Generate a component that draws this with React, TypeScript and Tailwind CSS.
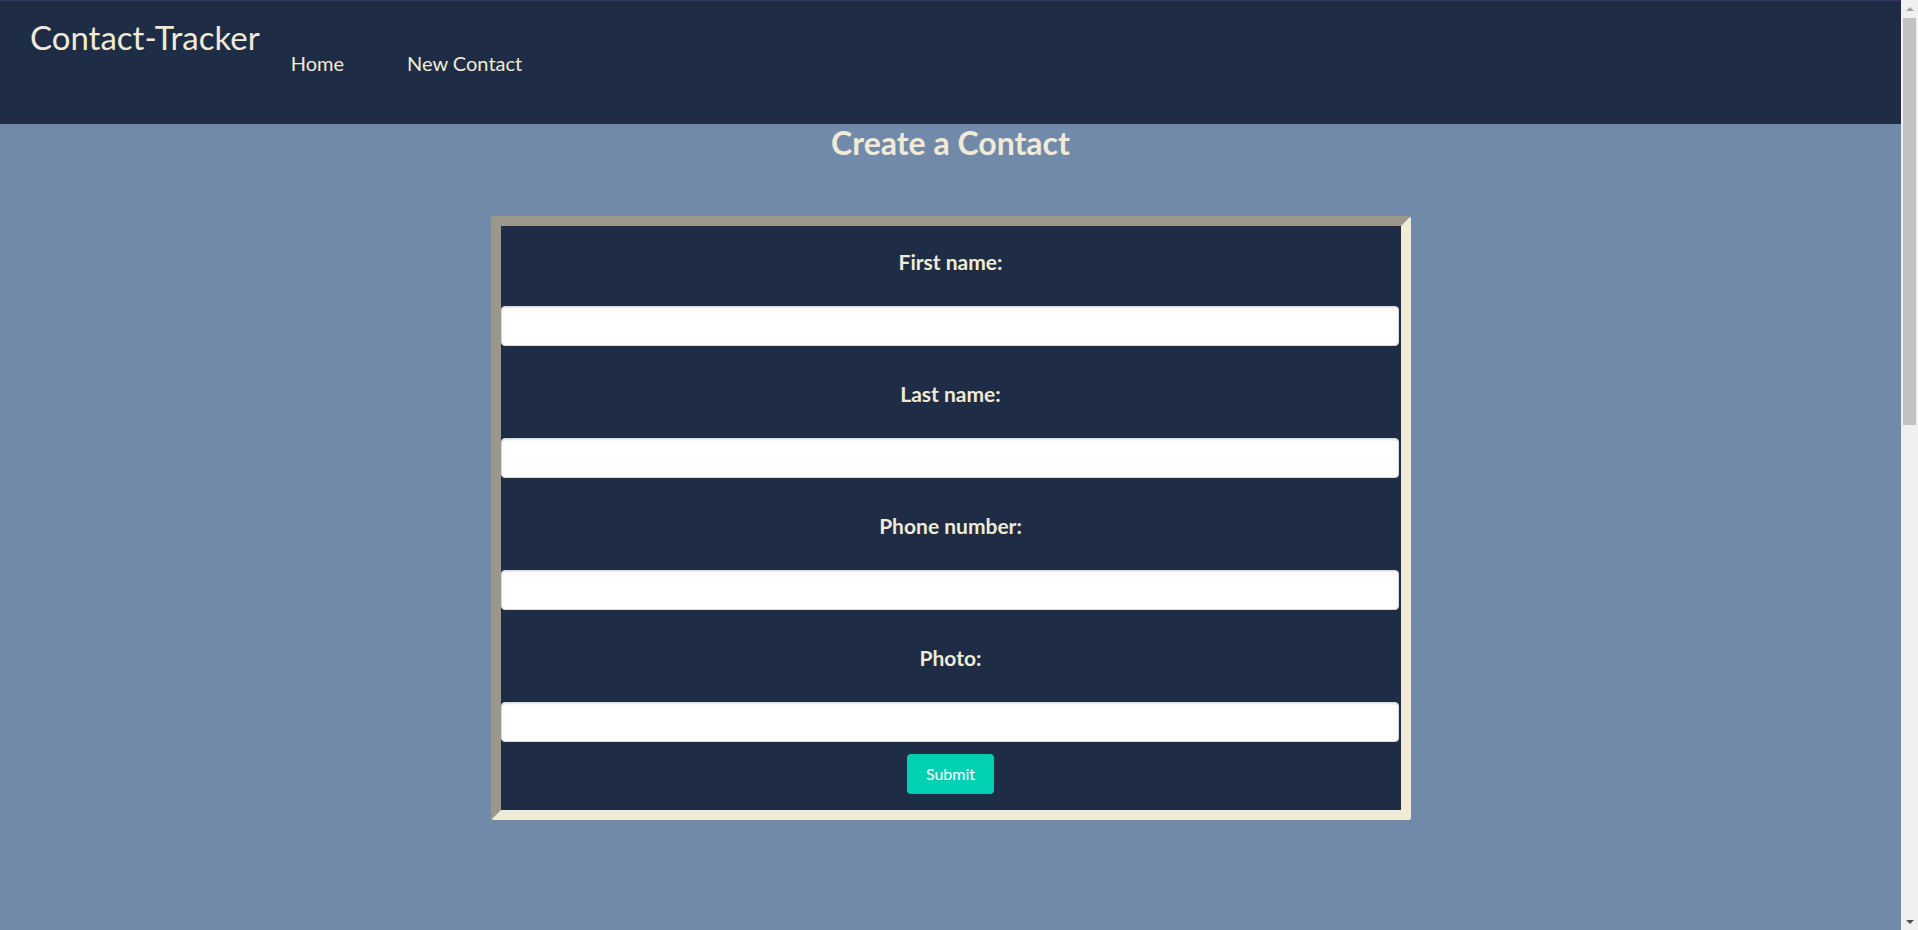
const fields = ['First name:', 'Last name:', 'Phone number:', 'Photo:']

// Static look-alike of the browser's classic scrollbar on the right edge
function Scrollbar() {
  return (
    <div className="w-[17px] shrink-0 bg-[#f0f0f0] flex flex-col items-center">
      <div className="h-[17px] flex items-center justify-center">
        <div className="w-0 h-0 border-l-[4px] border-r-[4px] border-b-[4px] border-transparent border-b-[#a3a3a3]" />
      </div>
      <div className="w-[13px] h-[407px] bg-[#c1c1c1] mt-[1px]" />
      <div className="flex-1" />
      <div className="h-[17px] flex items-center justify-center">
        <div className="w-0 h-0 border-l-[4px] border-r-[4px] border-t-[4px] border-transparent border-t-[#505050]" />
      </div>
    </div>
  )
}

export default function App() {
  return (
    <div className="h-[930px] flex overflow-hidden" style={{fontFamily: 'Lato, "Open Sans", sans-serif'}}>
      <div className="flex-1 bg-[#728aaa] border-t border-[#3b3466]">
        {/* Header */}
        <nav className="h-[123px] bg-[#1e2d45] flex items-start">
          <h1 className="ml-[30px] mt-[16px] text-[33px] leading-[40px] text-[#f0ead6]">Contact-Tracker</h1>
          <div className="flex gap-[63px] ml-[31px] mt-[49px] text-[20px] leading-[26px] text-[#f0ead6]">
            <a href="#">Home</a>
            <a href="#">New Contact</a>
          </div>
        </nav>

        <h2 className="text-center text-[32px] leading-[38px] font-bold text-[#f0ead6]">Create a Contact</h2>

        <form
          className="mx-auto mt-[54px] w-[920px] bg-[#1e2d45] border-[10px] border-t-[#9b978a] border-l-[#9b978a] border-r-[#f0ead8] border-b-[#f0ead8] rounded-[3px] pb-[16px]"
          onSubmit={e => e.preventDefault()}
        >
          {fields.map(label => (
            <div key={label} className="mb-[12px]">
              <label className="block text-center pt-[24px] pb-[32px] text-[21px] leading-[24px] font-bold text-[#f0ead6]">
                {label}
              </label>
              <input
                type="text"
                className="block w-[898px] h-[40px] bg-white rounded-[4px] border border-[#dbdbdb] shadow-[inset_0_1px_2px_rgba(10,10,10,0.1)] px-3 outline-none"
              />
            </div>
          ))}
          <div className="flex justify-center">
            <button
              type="submit"
              className="h-[40px] px-[19px] rounded-[4px] bg-[#00d1b2] text-white text-[16px]"
            >
              Submit
            </button>
          </div>
        </form>
      </div>
      <Scrollbar />
    </div>
  )
}
